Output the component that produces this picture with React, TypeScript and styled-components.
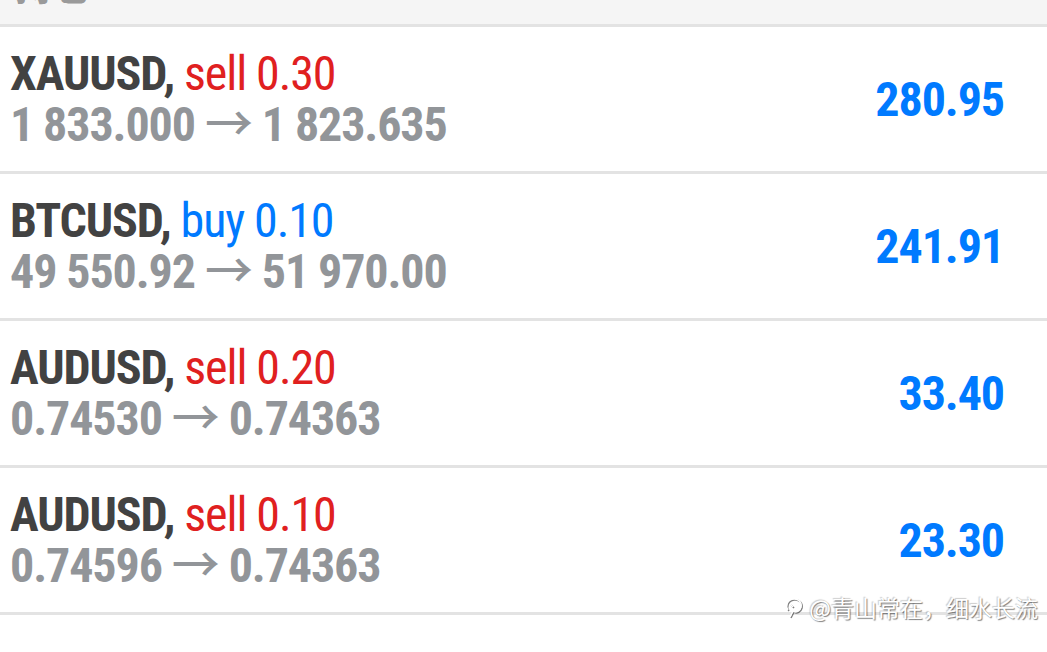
import React from 'react';
import styled, { createGlobalStyle } from 'styled-components';

type Side = 'buy' | 'sell';

interface IPosition {
  symbol: string;
  side: Side;
  volume: string;
  open: string;
  current: string;
  profit: string;
}

const positions: IPosition[] = [
  { symbol: 'XAUUSD', side: 'sell', volume: '0.30', open: '1 833.000', current: '1 823.635', profit: '280.95' },
  { symbol: 'BTCUSD', side: 'buy', volume: '0.10', open: '49 550.92', current: '51 970.00', profit: '241.91' },
  { symbol: 'AUDUSD', side: 'sell', volume: '0.20', open: '0.74530', current: '0.74363', profit: '33.40' },
  { symbol: 'AUDUSD', side: 'sell', volume: '0.10', open: '0.74596', current: '0.74363', profit: '23.30' },
];

// *global
const GlobalStyle = createGlobalStyle`
  body {
    margin: 0;
    background: #fff;
    font-family: "Roboto Condensed", Roboto, "Noto Sans CJK SC", sans-serif;
    font-stretch: condensed;
  }
`;

// *styled components
const Page = styled.div`
  position: relative;
  width: 1047px;
  height: 652px;
  overflow: hidden;
  background: #fff;
`;

const Header = styled.div`
  height: 24px;
  background: #f5f5f5;
  border-bottom: 3px solid #e3e3e3;
  overflow: hidden;
  padding-left: 15px;
`;

const HeaderTitle = styled.div`
  font-family: "Noto Sans CJK SC", sans-serif;
  font-size: 38px;
  line-height: 38px;
  font-weight: 700;
  color: #9a9a9a;
  margin-top: -35px;
`;

const Row = styled.div`
  display: flex;
  align-items: center;
  justify-content: space-between;
  height: 147px;
  box-sizing: border-box;
  padding: 20px 43px 20px 10px;
  border-bottom: 3px solid #e3e3e3;
`;

const Info = styled.div`
  display: flex;
  flex-direction: column;
  font-size: 48px;
  line-height: 51px;
  letter-spacing: -1.1px;
  white-space: nowrap;
`;

const Symbol = styled.span`
  font-weight: 700;
  color: #424242;
`;

const SideLabel = styled.span<{ $side: Side }>`
  color: ${(p) => (p.$side === 'buy' ? '#007aff' : '#e0201f')};
`;

const Prices = styled.div`
  font-weight: 700;
  color: #929599;
`;

const Arrow = styled.span`
  font-weight: 500;
`;

const Profit = styled.div`
  font-size: 48px;
  font-weight: 700;
  letter-spacing: -1.1px;
  color: #007aff;
`;

const Watermark = styled.div`
  position: absolute;
  right: 9px;
  top: 590px;
  display: flex;
  align-items: center;
  gap: 5px;
  font-family: "Noto Sans CJK SC", sans-serif;
  font-size: 23px;
  color: #fff;
  text-shadow: 1px 1px 1px rgba(0, 0, 0, 0.5), -1px -1px 1px rgba(0, 0, 0, 0.2);
`;

const Home = () => (
  <Page>
    <GlobalStyle />
    <Header>
      <HeaderTitle>持仓</HeaderTitle>
    </Header>
    {positions.map((p, i) => (
      <Row key={i}>
        <Info>
          <div>
            <Symbol>{p.symbol},</Symbol> <SideLabel $side={p.side}>{p.side} {p.volume}</SideLabel>
          </div>
          <Prices>
            {p.open} <Arrow>→</Arrow> {p.current}
          </Prices>
        </Info>
        <Profit>{p.profit}</Profit>
      </Row>
    ))}
    <Watermark>
      <svg width="20" height="24" viewBox="0 0 20 24" fill="none" stroke="#fff" strokeWidth="1.6" style={{ filter: 'drop-shadow(1px 1px 0.5px rgba(0,0,0,0.5))' }}>
        <path d="M4 15 C1 11 3 5 9 4 C14 3 18 7 17 12 C16 16 12 18 9 16" />
        <path d="M9 16 L6 22" />
        <path d="M6 9 L9 12" />
      </svg>
      <span>@青山常在，细水长流</span>
    </Watermark>
  </Page>
);

export default Home;
